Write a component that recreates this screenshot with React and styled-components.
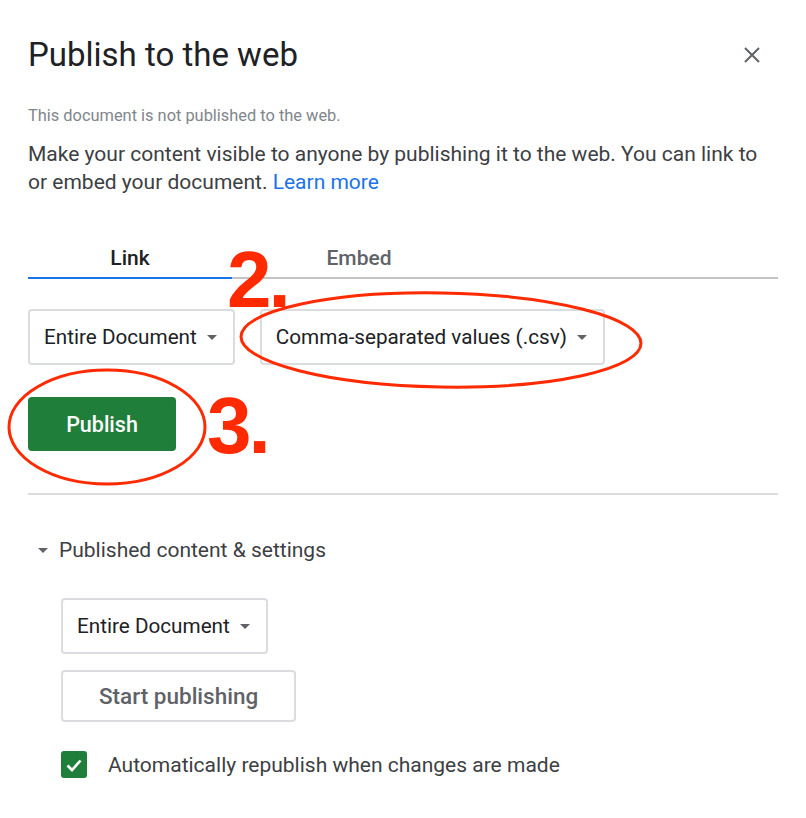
import React from 'react';
import styled, { createGlobalStyle } from 'styled-components';

const Global = createGlobalStyle`
  html, body {
    margin: 0;
    padding: 0;
    background: #fff;
  }
  body {
    font-family: Roboto, "Liberation Sans", Arial, sans-serif;
  }
`;

const Dialog = styled.div`
  position: relative;
  width: 806px;
  height: 818px;
  box-sizing: border-box;
  padding: 34px 28px 0 28px;
  color: #202124;
  overflow: hidden;
`;

const Header = styled.div`
  display: flex;
  justify-content: space-between;
  align-items: center;
`;

const Title = styled.h1`
  margin: 0;
  font-size: 33px;
  font-weight: 400;
  line-height: 42px;
  color: #202124;
`;

const Close = styled.button`
  border: none;
  background: none;
  padding: 0;
  margin-right: 16px;
  width: 20px;
  height: 20px;
  display: flex;
  align-items: center;
  justify-content: center;
  cursor: pointer;
`;

const Status = styled.div`
  margin-top: 30px;
  font-size: 16.4px;
  line-height: 20px;
  color: #80868b;
`;

const Intro = styled.p`
  margin: 14px 0 0;
  max-width: 740px;
  font-size: 21px;
  line-height: 28px;
  color: #3c4043;
`;

const Link = styled.a`
  color: #1a73e8;
  text-decoration: none;
`;

const Tabs = styled.div`
  display: flex;
  margin-top: 49px;
  border-bottom: 2px solid #c4c4c4;
`;

const Tab = styled.div`
  width: ${(p) => p.w}px;
  text-align: center;
  font-size: 21px;
  font-weight: 500;
  line-height: 26px;
  padding-bottom: 6px;
  margin-bottom: -2px;
  color: ${(p) => (p.active ? '#202124' : '#5f6368')};
  border-bottom: 2px solid ${(p) => (p.active ? '#1a73e8' : 'transparent')};
`;

const SelectRow = styled.div`
  display: flex;
  gap: 25px;
  margin-top: 30px;
`;

const Select = styled.div`
  display: inline-flex;
  align-items: center;
  box-sizing: border-box;
  height: 56px;
  padding: 0 16px 0 14px;
  border: 2px solid #dadce0;
  border-radius: 4px;
  font-size: 20.7px;
  color: #202124;
  gap: 10px;
  background: #fff;
`;

const Caret = styled.span`
  width: 0;
  height: 0;
  border-left: 5px solid transparent;
  border-right: 5px solid transparent;
  border-top: 5px solid #5f6368;
`;

const PublishButton = styled.button`
  margin-top: 32px;
  width: 148px;
  height: 54px;
  border: none;
  border-radius: 4px;
  background: #1e7e3a;
  color: #fff;
  font-family: Roboto, "Liberation Sans", Arial, sans-serif;
  font-size: 21.5px;
  font-weight: 500;
  cursor: pointer;
`;

const Divider = styled.hr`
  margin: 42px 0 0;
  border: none;
  border-top: 2px solid #dadce0;
`;

const Section = styled.div`
  padding-left: 10px;
`;

const SectionHead = styled.div`
  display: flex;
  align-items: center;
  gap: 11px;
  margin-top: 41px;
  font-size: 21px;
  line-height: 28px;
  color: #3c4043;
`;

const SectionBody = styled.div`
  display: flex;
  flex-direction: column;
  align-items: flex-start;
  gap: 16px;
  padding-left: 23px;
  margin-top: 34px;
`;

const OutlineButton = styled.button`
  box-sizing: border-box;
  height: 52px;
  padding: 0 36px;
  border: 2px solid #dadce0;
  border-radius: 4px;
  background: #fff;
  font-family: Roboto, "Liberation Sans", Arial, sans-serif;
  font-size: 22.5px;
  font-weight: 500;
  color: #5f6368;
`;

const CheckRow = styled.label`
  display: flex;
  align-items: center;
  gap: 21px;
  margin-top: 29px;
  padding-left: 23px;
  font-size: 21px;
  color: #3c4043;
`;

const Box = styled.span`
  width: 26px;
  height: 27px;
  border-radius: 3px;
  background: #1e7e3a;
  display: flex;
  align-items: center;
  justify-content: center;
`;

const Overlay = styled.svg`
  position: absolute;
  left: 0;
  top: 0;
  pointer-events: none;
`;

const Mark = styled.div`
  position: absolute;
  left: ${(p) => p.x}px;
  top: ${(p) => p.y}px;
  font-family: "Liberation Sans", Arial, sans-serif;
  font-weight: 700;
  font-size: 80px;
  line-height: 1;
  letter-spacing: -3px;
  color: #ff2a00;
`;

export default function App() {
  return (
    <>
      <Global />
      <Dialog>
        <Header>
          <Title>Publish to the web</Title>
          <Close aria-label="Close">
            <svg width="18" height="18" viewBox="0 0 18 18">
              <path d="M2 2 L16 16 M16 2 L2 16" stroke="#5f6368" strokeWidth="2" />
            </svg>
          </Close>
        </Header>

        <Status>This document is not published to the web.</Status>
        <Intro>
          Make your content visible to anyone by publishing it to the web. You can link to
          or embed your document. <Link href="#">Learn more</Link>
        </Intro>

        <Tabs>
          <Tab active w={204}>Link</Tab>
          <Tab w={254}>Embed</Tab>
        </Tabs>

        <SelectRow>
          <Select>Entire Document <Caret /></Select>
          <Select>Comma-separated values (.csv) <Caret /></Select>
        </SelectRow>

        <PublishButton>Publish</PublishButton>

        <Divider />

        <Section>
          <SectionHead>
            <Caret />
            Published content &amp; settings
          </SectionHead>
          <SectionBody>
            <Select>Entire Document <Caret /></Select>
            <OutlineButton>Start publishing</OutlineButton>
          </SectionBody>
        </Section>
        <Section>
          <CheckRow>
            <Box>
              <svg width="20" height="20" viewBox="0 0 20 20">
                <path d="M3.5 10.5 L8 15 L16.5 5.5" fill="none" stroke="#fff" strokeWidth="2.6" />
              </svg>
            </Box>
            Automatically republish when changes are made
          </CheckRow>
        </Section>

        <Overlay width="806" height="818">
          <ellipse cx="441" cy="340" rx="200" ry="47" fill="none" stroke="#ff2a00" strokeWidth="3" transform="rotate(1 441 340)" />
          <ellipse cx="107" cy="427" rx="98" ry="57" fill="none" stroke="#ff2a00" strokeWidth="3" />
        </Overlay>
        <Mark x={227} y={240}>2.</Mark>
        <Mark x={207} y={386}>3.</Mark>
      </Dialog>
    </>
  );
}
